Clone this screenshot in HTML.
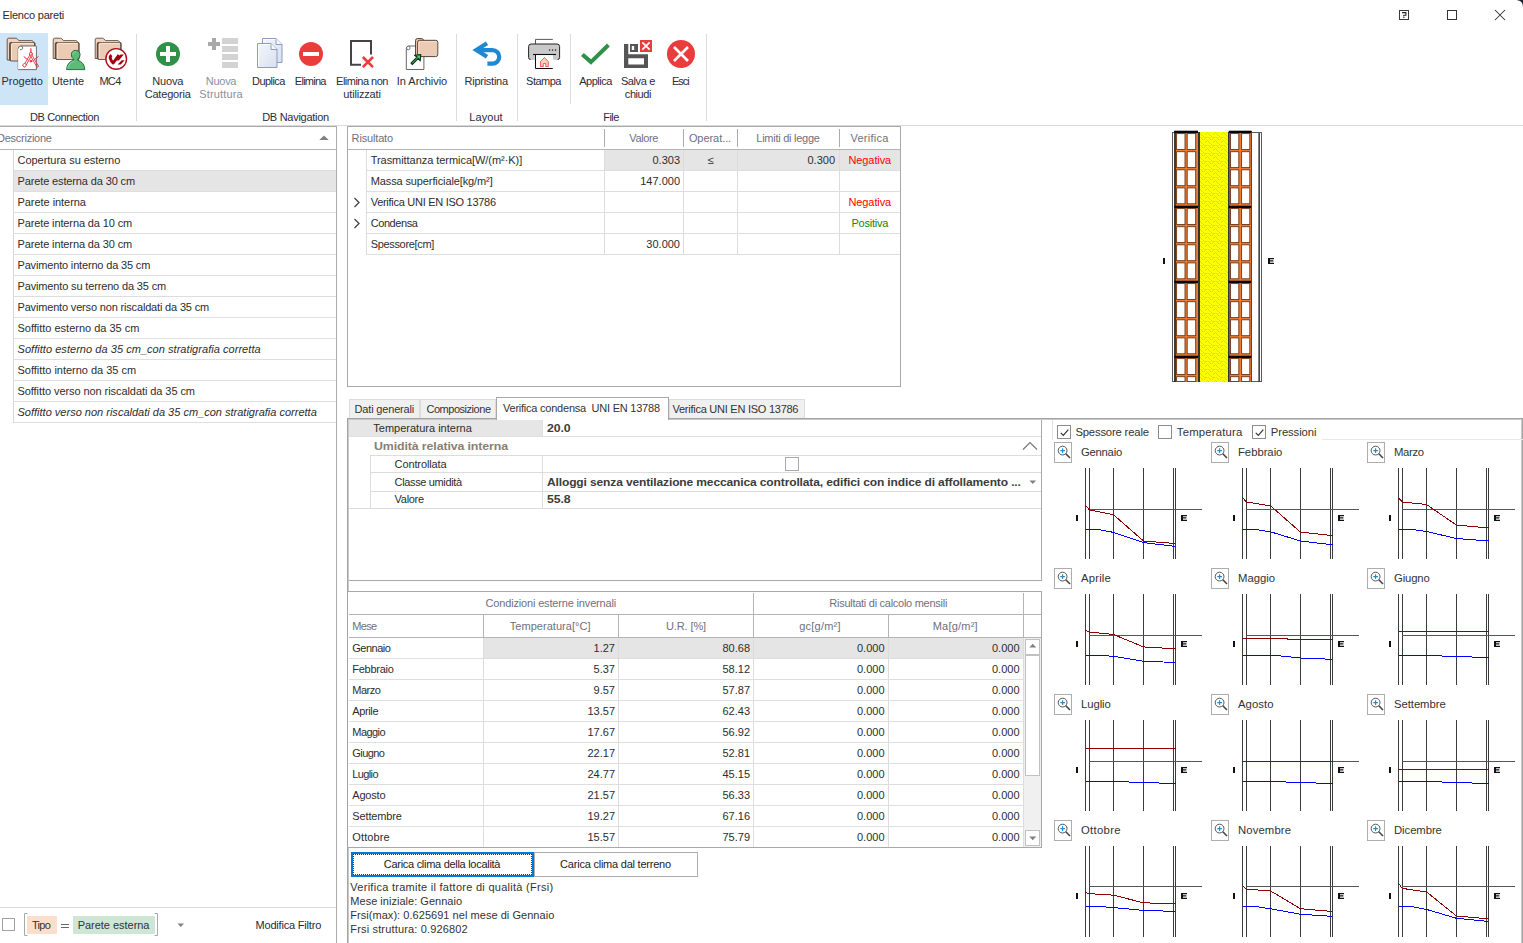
<!DOCTYPE html>
<html><head><meta charset="utf-8"><title>Elenco pareti</title>
<style>
html,body{margin:0;padding:0;background:#fff}
body{width:1523px;height:943px;overflow:hidden;position:relative;font-family:"Liberation Sans",sans-serif;font-size:11px;color:#2d2d2d}
div{position:absolute;box-sizing:border-box}
.t{white-space:nowrap;line-height:13px;letter-spacing:-0.12px}
.rb{color:#2c2c3a;letter-spacing:-0.05px}
</style></head>
<body>
<div class="t" style="left:2.5px;top:9px;color:#2a2a2a;letter-spacing:-0.202px">Elenco pareti</div>
<svg style="position:absolute;left:1390px;top:0px" width="133" height="30" viewBox="0 0 133 30">
<rect x="9.5" y="10.5" width="9" height="9" fill="none" stroke="#3a3a3a" stroke-width="1"/>
<path d="M12 12.6 h3.9 v2.6 h-2.1 v1.4" fill="none" stroke="#2a2a2a" stroke-width="1.1"/>
<rect x="13.2" y="17" width="1.2" height="1" fill="#2a2a2a"/>
<rect x="57.5" y="10.5" width="9" height="9" fill="none" stroke="#333" stroke-width="1"/>
<path d="M105 10 L115 20 M115 10 L105 20" fill="none" stroke="#333" stroke-width="1.05"/>
<path d="M126.5 0 Q133 0.5 133 7 L133 0 Z" fill="#1a2230"/>
</svg>
<div style="left:0px;top:33px;width:48px;height:72px;background:#cde5f7"></div>
<div style="left:136px;top:34px;width:1px;height:87px;background:#dcdcdc"></div>
<div style="left:456px;top:34px;width:1px;height:87px;background:#dcdcdc"></div>
<div style="left:517px;top:34px;width:1px;height:87px;background:#dcdcdc"></div>
<div style="left:570px;top:34px;width:1px;height:70px;background:#dcdcdc"></div>
<div style="left:706px;top:34px;width:1px;height:87px;background:#dcdcdc"></div>
<div class="t rb" style="left:-27.8px;width:100px;text-align:center;top:75px;;letter-spacing:-0.042px">Progetto</div>
<div class="t rb" style="left:18.0px;width:100px;text-align:center;top:75px;;letter-spacing:-0.064px">Utente</div>
<div class="t rb" style="left:60.0px;width:100px;text-align:center;top:75px;;letter-spacing:-0.667px">MC4</div>
<div class="t rb" style="left:117.69999999999999px;width:100px;text-align:center;top:75px;;letter-spacing:-0.174px">Nuova</div>
<div class="t rb" style="left:117.69999999999999px;width:100px;text-align:center;top:88px;;letter-spacing:-0.175px">Categoria</div>
<div class="t rb" style="left:171.0px;width:100px;text-align:center;top:75px;color:#8e8e99;;letter-spacing:-0.299px">Nuova</div>
<div class="t rb" style="left:171.0px;width:100px;text-align:center;top:88px;color:#8e8e99;;letter-spacing:0.139px">Struttura</div>
<div class="t rb" style="left:218.39999999999998px;width:100px;text-align:center;top:75px;;letter-spacing:-0.581px">Duplica</div>
<div class="t rb" style="left:260.3px;width:100px;text-align:center;top:75px;;letter-spacing:-0.746px">Elimina</div>
<div class="t rb" style="left:312.0px;width:100px;text-align:center;top:75px;;letter-spacing:-0.518px">Elimina non</div>
<div class="t rb" style="left:312.0px;width:100px;text-align:center;top:88px;;letter-spacing:-0.181px">utilizzati</div>
<div class="t rb" style="left:372.0px;width:100px;text-align:center;top:75px;;letter-spacing:-0.035px">In Archivio</div>
<div class="t rb" style="left:436.2px;width:100px;text-align:center;top:75px;;letter-spacing:-0.262px">Ripristina</div>
<div class="t rb" style="left:493.5px;width:100px;text-align:center;top:75px;;letter-spacing:-0.524px">Stampa</div>
<div class="t rb" style="left:545.6px;width:100px;text-align:center;top:75px;;letter-spacing:-0.480px">Applica</div>
<div class="t rb" style="left:587.9px;width:100px;text-align:center;top:75px;;letter-spacing:-0.384px">Salva e</div>
<div class="t rb" style="left:587.9px;width:100px;text-align:center;top:88px;;letter-spacing:-0.450px">chiudi</div>
<div class="t rb" style="left:630.3px;width:100px;text-align:center;top:75px;;letter-spacing:-0.994px">Esci</div>
<div class="t rb" style="left:4.5px;width:120px;text-align:center;top:111px;;letter-spacing:-0.375px">DB Connection</div>
<div class="t rb" style="left:235.5px;width:120px;text-align:center;top:111px;;letter-spacing:-0.277px">DB Navigation</div>
<div class="t rb" style="left:426.0px;width:120px;text-align:center;top:111px;;letter-spacing:0.074px">Layout</div>
<div class="t rb" style="left:551.0px;width:120px;text-align:center;top:111px;;letter-spacing:-0.578px">File</div>
<div style="left:0px;top:125px;width:1523px;height:1px;background:#dadada"></div>
<svg style="position:absolute;left:0;top:30px" width="720" height="45" viewBox="0 30 720 45"><defs>
<linearGradient id="pg" x1="0" y1="0" x2="1" y2="1"><stop offset="0" stop-color="#f4f6fb"/><stop offset="1" stop-color="#d8e0f0"/></linearGradient>
</defs><path d="M7.2 60.0 V39.800000000000004 q0 -1.6 1.6 -1.6 h7 q0.8 0 1.4 0.6 l1.6 1.8 h12.700000000000001 q0.8 0 1.4 0.6 l2.2 2.2 v16.8 z" fill="#f3d3be" stroke="#4a3a30" stroke-width="0.8" stroke-linejoin="round"/><path d="M9.7 60.4 V44.5 q0 -2 2 -2" fill="none" stroke="#5f4e44" stroke-width="1.3"/><path d="M10.6 61.0 V44.300000000000004 q0 -1.6 1.6 -1.6 H34.5 V61.0 Z" fill="#eccbb5" stroke="#4a3a30" stroke-width="0.8" stroke-linejoin="round"/><path d="M11.5 60.1 V44.7 q0 -1.1 1.1 -1.1 H33.6" fill="none" stroke="#fdecdc" stroke-width="0.9"/><path d="M20.8 46 h14.8 q0.8 0 0.8 0.8 v22.8 h-18.2 v-21 z" fill="#fff" stroke="#4d4d4d" stroke-width="0.8"/><path d="M18.6 48.6 v20.6" fill="none" stroke="#fff" stroke-width="0.9"/><path d="M18.3 48.4 q-0.2 -2.4 2.6 -2.4 q2.2 0.2 1.8 2.2 q-0.6 2 -2.6 1.6" fill="#fff" stroke="#4d4d4d" stroke-width="0.8"/><g fill="none" stroke="#ee2a3a" stroke-width="0.9" stroke-linecap="round" stroke-linejoin="round"><path d="M30.9 48.8 v3.4" stroke-width="1.2"/><circle cx="30.9" cy="53.9" r="1.5" fill="#fff"/><path d="M29.8 55.1 L23.7 65.6 l1.6 1 L31 56.4"/><path d="M32 55.1 L38.5 66.4 l-1.5 0.8 L30.8 56.4"/><path d="M24 56.7 L28 60 M38.2 56.7 L33.8 60" stroke-width="1"/><circle cx="30.9" cy="61.1" r="0.9" fill="#ee2a3a"/><path d="M22.7 64.8 l2 -1.7 l1.9 2.1 l-2.1 1.8 z" fill="#fff"/></g><path d="M53.2 58.5 V39.800000000000004 q0 -1.6 1.6 -1.6 h5.6 q0.8 0 1.4 0.6 l1.6 1.8 h12.199999999999998 q0.8 0 1.4 0.6 l2.2 2.2 v15.3 z" fill="#f3d3be" stroke="#4a3a30" stroke-width="0.8" stroke-linejoin="round"/><path d="M55.400000000000006 58.9 V44.5 q0 -2 2 -2" fill="none" stroke="#5f4e44" stroke-width="1.3"/><path d="M56.300000000000004 59.5 V44.300000000000004 q0 -1.6 1.6 -1.6 H78.6 V59.5 Z" fill="#eccbb5" stroke="#4a3a30" stroke-width="0.8" stroke-linejoin="round"/><path d="M57.2 58.6 V44.7 q0 -1.1 1.1 -1.1 H77.69999999999999" fill="none" stroke="#fdecdc" stroke-width="0.9"/><path d="M66.6 69.6 q0.4 -7.4 7 -9.4 v-1.2 q-2.3 -1.4 -2.3 -4.3 a4.4 4.4 0 0 1 8.8 0 q0 2.9 -2.3 4.3 v1.2 q6.6 2 7 9.4 z" fill="#5dbb79" stroke="#1f5f36" stroke-width="0.9" stroke-linejoin="round"/><path d="M67.8 68.6 q0.8 -5.6 6.2 -7.4 M72.6 54.6 a3.2 3.2 0 0 1 3.2 -3.1" fill="none" stroke="#86e3a6" stroke-width="0.8"/><path d="M95.2 58.5 V39.800000000000004 q0 -1.6 1.6 -1.6 h5.6 q0.8 0 1.4 0.6 l1.6 1.8 h12.199999999999998 q0.8 0 1.4 0.6 l2.2 2.2 v15.3 z" fill="#f3d3be" stroke="#4a3a30" stroke-width="0.8" stroke-linejoin="round"/><path d="M97.39999999999999 58.9 V44.5 q0 -2 2 -2" fill="none" stroke="#5f4e44" stroke-width="1.3"/><path d="M98.3 59.5 V44.300000000000004 q0 -1.6 1.6 -1.6 H120.6 V59.5 Z" fill="#eccbb5" stroke="#4a3a30" stroke-width="0.8" stroke-linejoin="round"/><path d="M99.2 58.6 V44.7 q0 -1.1 1.1 -1.1 H119.69999999999999" fill="none" stroke="#fdecdc" stroke-width="0.9"/><circle cx="116.2" cy="58.9" r="10.3" fill="#fff" stroke="#a80c1a" stroke-width="1.4"/><path d="M111.6 55.2 Q109.7 56.4 110.3 58.4 Q111.3 61.6 113.2 63 L118.9 55" fill="none" stroke="#a2000c" stroke-width="2.9" stroke-linejoin="round" stroke-linecap="butt"/><path d="M120.6 54.6 h3.2 l-5 6 h-3.2 z M121.8 60.2 h2.8 l-3.8 4.4 h-3.2 z" fill="#a2000c"/><circle cx="168" cy="54" r="12" fill="#2f9048"/><path d="M166 46 h4 v6 h6 v4 h-6 v6 h-4 v-6 h-6 v-4 h6 z" fill="#fff"/><path d="M212 38 h4 v4 h4 v4 h-4 v4 h-4 v-4 h-4 v-4 h4 z" fill="#a9a9a9"/><rect x="222" y="38" width="16" height="6" fill="#d3d3d3"/><rect x="222" y="46" width="16" height="6" fill="#d3d3d3"/><rect x="222" y="54" width="16" height="6" fill="#d3d3d3"/><rect x="222" y="62" width="16" height="6" fill="#d3d3d3"/><path d="M262.5 38.5 h13.5 l6 6 v18 h-19.5 z" fill="url(#pg)" stroke="#8e9cc4" stroke-width="1"/><path d="M276.0 38.5 v6 h6" fill="#f4f6fb" stroke="#8e9cc4" stroke-width="1"/><path d="M263.5 61.5 v-22 h12.0" fill="none" stroke="#fff" stroke-width="0.9"/><path d="M257.5 43.5 h13.5 l6 6 v18 h-19.5 z" fill="url(#pg)" stroke="#8e9cc4" stroke-width="1"/><path d="M271.0 43.5 v6 h6" fill="#f4f6fb" stroke="#8e9cc4" stroke-width="1"/><path d="M258.5 66.5 v-22 h12.0" fill="none" stroke="#fff" stroke-width="0.9"/><circle cx="311" cy="54" r="12" fill="#eb3c3c"/><rect x="303" y="52" width="16" height="4" fill="#fff"/><path d="M361 64.8 H351 V41 H371 V54.5" fill="none" stroke="#444" stroke-width="2"/><path d="M362.8 57 L373 67.2 M373 57 L362.8 67.2" fill="none" stroke="#eb3c3c" stroke-width="2.6"/><path d="M408.3 46 h14.8 q0.8 0 0.8 0.8 v22.7 h-17.6 v-21.5 z" fill="#fff" stroke="#555" stroke-width="0.9"/><circle cx="408.3" cy="48" r="1.8" fill="#fff" stroke="#555" stroke-width="0.8"/><path d="M415.5 56 v-15.5 q0 -2 2 -2 h4 q1.5 0 2 1.5 l0.5 1 h11 v15 z" fill="#e6bfa6" stroke="#4a3a30" stroke-width="0.9"/><rect x="417.6" y="40.3" width="20.2" height="16.3" rx="2" fill="#eccbb5" stroke="#4a3a30" stroke-width="0.9"/><path d="M418.8 55.5 v-12 q0 -1.8 1.8 -1.8 h15.5" fill="none" stroke="#f7e3d6" stroke-width="0.9"/><path d="M411 63.2 L417.2 57 L414.5 55.2 L420.8 54.6 L420.2 61 L418.4 58.3 L412.2 64.5 Z" fill="#45d678" stroke="#0e2e18" stroke-width="1.1" stroke-linejoin="round"/><path d="M487 43.2 L476.3 50 L487 56.8" fill="none" stroke="#1e88d2" stroke-width="4.2" stroke-linejoin="miter"/><path d="M477.5 50.1 H492.4 a6.8 6.8 0 0 1 0 13.6 H487.4" fill="none" stroke="#1e88d2" stroke-width="4.2"/><path d="M535.5 44 v-4.6 h17.3" fill="none" stroke="#444" stroke-width="0.9"/><path d="M528.6 58 v-11.5 q0 -2.5 2.5 -2.5 h26 q2.5 0 2.5 2.5 v11.5 q0 1.8 -1.8 1.8 h-4.8 v-5.3 h-17.8 v5.3 h-4.8 q-1.8 0 -1.8 -1.8 z" fill="#c9c9c9"/><path d="M528.6 57.5 v-11 q0 -2.5 2.5 -2.5 h26 q2.5 0 2.5 2.5 v11" fill="none" stroke="#222" stroke-width="1"/><path d="M528.6 57.5 q0 2 2 2 M559.6 57.5 q0 2 -2 2" fill="none" stroke="#222" stroke-width="1"/><rect x="535.5" y="54.8" width="17.3" height="13.8" fill="#fff"/><path d="M533 54.5 h23" fill="none" stroke="#111" stroke-width="1.1"/><path d="M535.5 54.5 v14 h17.3" fill="none" stroke="#111" stroke-width="1"/><rect x="548.9" y="49.4" width="1.3" height="1.3" fill="#222"/><rect x="551.9" y="49.4" width="1.3" height="1.3" fill="#222"/><rect x="554.9" y="49.4" width="1.3" height="1.3" fill="#222"/><path d="M540.5 66.5 v-5 L544.3 57.6 L548.3 61.5 v5 h-2.6 v-3 h-2.4 v3 z" fill="#f3d2bd" stroke="#ee3a3a" stroke-width="0.8"/><path d="M583.8 53 L591 59.3 L607 43.6 L609.8 46.6 L591 64.8 L581 56 Z" fill="#2f9048"/><path d="M624 44 h4.3 v10.2 h19.7 v13.8 h-24 z M628.3 58.2 h15.7 v6.2 h-15.7 z" fill="#555" fill-rule="evenodd"/><path d="M630 44 h8 v8 h-8 z M631.8 46 h2.4 v4 h-2.4 z" fill="#555" fill-rule="evenodd"/><rect x="640" y="40" width="12" height="12" fill="#eb3c3c"/><path d="M642.3 42.3 L649.7 49.7 M649.7 42.3 L642.3 49.7" stroke="#fff" stroke-width="1.7" fill="none"/><circle cx="681" cy="54" r="14" fill="#eb3c3c"/><path d="M674 47 L688 61 M688 47 L674 61" stroke="#fff" stroke-width="2.7" fill="none"/></svg>
<div style="left:0px;top:126px;width:337px;height:1px;background:#ababab"></div>
<div style="left:336px;top:126px;width:1px;height:817px;background:#ababab"></div>
<div class="t" style="left:-3px;top:132px;color:#70707c;letter-spacing:-0.25px">Descrizione</div>
<svg style="position:absolute;left:319px;top:135px" width="10" height="6"><path d="M0.3 5 L5 0.4 L9.7 5 Z" fill="#808080"/></svg>
<div style="left:0px;top:149px;width:336px;height:1px;background:#b4b4b4"></div>
<div style="left:14px;top:171px;width:322px;height:20px;background:#e5e5e5"></div>
<div style="left:13px;top:150px;width:1px;height:273px;background:#d8d8d8"></div>
<div class="t" style="left:17.5px;top:154px;;letter-spacing:-0.029px">Copertura su esterno</div>
<div style="left:14px;top:170px;width:322px;height:1px;background:#dedede"></div>
<div class="t" style="left:17.5px;top:175px;;letter-spacing:-0.130px">Parete esterna da 30 cm</div>
<div style="left:14px;top:191px;width:322px;height:1px;background:#dedede"></div>
<div class="t" style="left:17.5px;top:196px;;letter-spacing:-0.047px">Parete interna</div>
<div style="left:14px;top:212px;width:322px;height:1px;background:#dedede"></div>
<div class="t" style="left:17.5px;top:217px;;letter-spacing:-0.123px">Parete interna da 10 cm</div>
<div style="left:14px;top:233px;width:322px;height:1px;background:#dedede"></div>
<div class="t" style="left:17.5px;top:238px;;letter-spacing:-0.123px">Parete interna da 30 cm</div>
<div style="left:14px;top:254px;width:322px;height:1px;background:#dedede"></div>
<div class="t" style="left:17.5px;top:259px;;letter-spacing:-0.167px">Pavimento interno da 35 cm</div>
<div style="left:14px;top:275px;width:322px;height:1px;background:#dedede"></div>
<div class="t" style="left:17.5px;top:280px;;letter-spacing:-0.149px">Pavimento su terreno da 35 cm</div>
<div style="left:14px;top:296px;width:322px;height:1px;background:#dedede"></div>
<div class="t" style="left:17.5px;top:301px;;letter-spacing:-0.169px">Pavimento verso non riscaldati da 35 cm</div>
<div style="left:14px;top:317px;width:322px;height:1px;background:#dedede"></div>
<div class="t" style="left:17.5px;top:322px;;letter-spacing:-0.012px">Soffitto esterno da 35 cm</div>
<div style="left:14px;top:338px;width:322px;height:1px;background:#dedede"></div>
<div class="t" style="left:17.5px;top:343px;font-style:italic;letter-spacing:0.044px">Soffitto esterno da 35 cm_con stratigrafia corretta</div>
<div style="left:14px;top:359px;width:322px;height:1px;background:#dedede"></div>
<div class="t" style="left:17.5px;top:364px;;letter-spacing:-0.019px">Soffitto interno da 35 cm</div>
<div style="left:14px;top:380px;width:322px;height:1px;background:#dedede"></div>
<div class="t" style="left:17.5px;top:385px;;letter-spacing:-0.072px">Soffitto verso non riscaldati da 35 cm</div>
<div style="left:14px;top:401px;width:322px;height:1px;background:#dedede"></div>
<div class="t" style="left:17.5px;top:406px;font-style:italic;letter-spacing:0.005px">Soffitto verso non riscaldati da 35 cm_con stratigrafia corretta</div>
<div style="left:14px;top:422px;width:322px;height:1px;background:#dedede"></div>
<div style="left:0px;top:907px;width:336px;height:1px;background:#dcdcdc"></div>
<div style="left:2px;top:918px;width:13px;height:13px;border:1px solid #a0a0a0;background:#fff"></div>
<svg style="position:absolute;left:24px;top:913px" width="136" height="24"><path d="M3.5 0.5 h-3 v22 h3 M130.5 0.5 h3 v22 h-3" fill="none" stroke="#a8a8a8"/></svg>
<div style="left:27px;top:916px;width:30px;height:18px;background:#fbdfcc;border-radius:1px"></div>
<div class="t" style="left:32px;top:919px;color:#333;letter-spacing:-0.733px">Tipo</div>
<div style="left:61px;top:924px;width:8px;height:1px;background:#666"></div>
<div style="left:61px;top:927px;width:8px;height:1px;background:#666"></div>
<div style="left:73px;top:916px;width:82px;height:18px;background:#cde6d6;border-radius:1px"></div>
<div class="t" style="left:77.7px;top:919px;color:#333;letter-spacing:-0.027px">Parete esterna</div>
<svg style="position:absolute;left:177px;top:923px" width="8" height="5"><path d="M0.5 0.5 L7 0.5 L3.75 4 Z" fill="#808080"/></svg>
<div class="t" style="left:255.5px;top:919px;color:#2a2a3a;letter-spacing:-0.191px">Modifica Filtro</div>
<div style="left:347px;top:126px;width:554px;height:261px;border:1px solid #a8a8a8;background:#fff"></div>
<div style="left:348px;top:149px;width:552px;height:1px;background:#b4b4b4"></div>
<div style="left:604px;top:129px;width:1px;height:18px;background:#ababab"></div>
<div style="left:683px;top:129px;width:1px;height:18px;background:#ababab"></div>
<div style="left:737px;top:129px;width:1px;height:18px;background:#ababab"></div>
<div style="left:839px;top:129px;width:1px;height:18px;background:#ababab"></div>
<div class="t" style="left:351.6px;top:132px;color:#70707c;;letter-spacing:-0.162px">Risultato</div>
<div class="t" style="left:603.6px;width:80px;text-align:center;top:132px;color:#70707c;;letter-spacing:-0.397px">Valore</div>
<div class="t" style="left:680.0px;width:60px;text-align:center;top:132px;color:#70707c;;letter-spacing:-0.062px">Operat...</div>
<div class="t" style="left:738.0px;width:100px;text-align:center;top:132px;color:#70707c;;letter-spacing:-0.262px">Limiti di legge</div>
<div class="t" style="left:839.5px;width:60px;text-align:center;top:132px;color:#70707c;;letter-spacing:0.246px">Verifica</div>
<div style="left:605px;top:150px;width:295px;height:20px;background:#e5e5e5"></div>
<div style="left:366px;top:150px;width:1px;height:105px;background:#dcdcdc"></div>
<div style="left:604px;top:150px;width:1px;height:105px;background:#dcdcdc"></div>
<div style="left:683px;top:150px;width:1px;height:105px;background:#dcdcdc"></div>
<div style="left:737px;top:150px;width:1px;height:105px;background:#dcdcdc"></div>
<div style="left:839px;top:150px;width:1px;height:105px;background:#dcdcdc"></div>
<div class="t" style="left:370.7px;top:154px;;letter-spacing:-0.048px">Trasmittanza termica[W/(m²·K)]</div>
<div class="t" style="right:843px;top:154px;letter-spacing:0">0.303</div>
<div class="t" style="left:690.5px;width:40px;text-align:center;top:154px;">≤</div>
<div class="t" style="right:688px;top:154px;letter-spacing:0">0.300</div>
<div class="t" style="left:839.8px;width:60px;text-align:center;top:154px;color:#f00;letter-spacing:-0.103px">Negativa</div>
<div style="left:367px;top:170px;width:533px;height:1px;background:#dedede"></div>
<div class="t" style="left:370.7px;top:175px;;letter-spacing:-0.113px">Massa superficiale[kg/m²]</div>
<div class="t" style="right:843px;top:175px;letter-spacing:0">147.000</div>
<div style="left:367px;top:191px;width:533px;height:1px;background:#dedede"></div>
<div class="t" style="left:370.7px;top:196px;;letter-spacing:-0.278px">Verifica UNI EN ISO 13786</div>
<div class="t" style="left:839.8px;width:60px;text-align:center;top:196px;color:#f00;letter-spacing:-0.103px">Negativa</div>
<svg style="position:absolute;left:353px;top:197px" width="8" height="11"><path d="M1.5 1 L6 5.5 L1.5 10" fill="none" stroke="#444" stroke-width="1.3"/></svg>
<div style="left:367px;top:212px;width:533px;height:1px;background:#dedede"></div>
<div class="t" style="left:370.7px;top:217px;;letter-spacing:-0.422px">Condensa</div>
<div class="t" style="left:839.8px;width:60px;text-align:center;top:217px;color:#0a8a0a;letter-spacing:-0.219px">Positiva</div>
<svg style="position:absolute;left:353px;top:218px" width="8" height="11"><path d="M1.5 1 L6 5.5 L1.5 10" fill="none" stroke="#444" stroke-width="1.3"/></svg>
<div style="left:367px;top:233px;width:533px;height:1px;background:#dedede"></div>
<div class="t" style="left:370.7px;top:238px;;letter-spacing:-0.332px">Spessore[cm]</div>
<div class="t" style="right:843px;top:238px;letter-spacing:0">30.000</div>
<div style="left:367px;top:254px;width:533px;height:1px;background:#dedede"></div>
<div style="left:347px;top:418px;width:1176px;height:1px;background:#a3a3a3"></div>
<div style="left:348px;top:419px;width:1175px;height:1px;background:#c9c9c9"></div>
<div style="left:1521px;top:420px;width:1px;height:523px;background:#c9c9c9"></div>
<div style="left:1522px;top:418px;width:1px;height:525px;background:#a3a3a3"></div>
<div style="left:347px;top:418px;width:1px;height:525px;background:#a3a3a3"></div>
<div style="left:348px;top:419px;width:1px;height:524px;background:#c9c9c9"></div>
<div style="left:349px;top:399px;width:71px;height:19px;background:#f0f0f0;border:1px solid #dcdcdc;border-bottom:none"></div>
<div class="t" style="left:354.5px;top:403px;color:#333;letter-spacing:-0.164px">Dati generali</div>
<div style="left:420px;top:399px;width:76px;height:19px;background:#f0f0f0;border:1px solid #dcdcdc;border-bottom:none"></div>
<div class="t" style="left:426.5px;top:403px;color:#333;letter-spacing:-0.473px">Composizione</div>
<div style="left:669px;top:399px;width:136px;height:19px;background:#f0f0f0;border:1px solid #dcdcdc;border-bottom:none"></div>
<div class="t" style="left:672.5px;top:403px;color:#333;letter-spacing:-0.253px">Verifica UNI EN ISO 13786</div>
<div style="left:496px;top:397px;width:173px;height:23px;background:#fff;border:1px solid #a8a8a8;border-bottom:none"></div>
<div class="t" style="left:503px;top:402px;color:#333;letter-spacing:-0.229px">Verifica condensa&nbsp; UNI EN 13788</div>
<div style="left:1041px;top:420px;width:1px;height:161px;background:#a8a8a8"></div>
<div style="left:349px;top:580px;width:693px;height:1px;background:#a8a8a8"></div>
<div style="left:349px;top:420px;width:193px;height:16px;background:#e6e6e6"></div>
<div class="t" style="left:373.3px;top:422px;;letter-spacing:0.003px">Temperatura interna</div>
<div class="t" style="left:547px;top:422px;font-weight:bold;color:#3c3c3c;transform:scaleX(1.1176);transform-origin:left center">20.0</div>
<div style="left:349px;top:436px;width:692px;height:1px;background:#e0e0e0"></div>
<div class="t" style="left:374px;top:440px;font-weight:bold;color:#8a7f74;transform:scaleX(1.1281);transform-origin:left center">Umidità relativa interna</div>
<svg style="position:absolute;left:1022px;top:441px" width="16" height="10"><path d="M1 8.5 L8 1.5 L15 8.5" fill="none" stroke="#777" stroke-width="1.2"/></svg>
<div style="left:370px;top:455px;width:671px;height:1px;background:#dcdcdc"></div>
<div style="left:370px;top:455px;width:1px;height:54px;background:#dcdcdc"></div>
<div style="left:542px;top:420px;width:1px;height:16px;background:#e0e0e0"></div>
<div style="left:542px;top:455px;width:1px;height:54px;background:#dcdcdc"></div>
<div class="t" style="left:394.6px;top:458px;">Controllata</div>
<div class="t" style="left:394.6px;top:476px;;letter-spacing:-0.357px">Classe umidità</div>
<div class="t" style="left:547px;top:476px;font-weight:bold;color:#3c3c3c;transform:scaleX(1.0921);transform-origin:left center">Alloggi senza ventilazione meccanica controllata, edifici con indice di affollamento ...</div>
<div class="t" style="left:394.6px;top:493px;;letter-spacing:-0.297px">Valore</div>
<div class="t" style="left:547px;top:493px;font-weight:bold;color:#3c3c3c;transform:scaleX(1.1176);transform-origin:left center">55.8</div>
<div style="left:370px;top:472px;width:671px;height:1px;background:#dcdcdc"></div>
<div style="left:370px;top:491px;width:671px;height:1px;background:#dcdcdc"></div>
<div style="left:349px;top:508px;width:692px;height:1px;background:#dcdcdc"></div>
<div style="left:785px;top:457px;width:14px;height:14px;border:1px solid #a8a8a8;background:#fff"></div>
<svg style="position:absolute;left:1029px;top:480px" width="8" height="5"><path d="M0.5 0.5 L7 0.5 L3.75 4 Z" fill="#808080"/></svg>
<div style="left:348px;top:591px;width:694px;height:257px;border:1px solid #a8a8a8;border-left:none;background:#fff"></div>
<div style="left:349px;top:614px;width:692px;height:1px;background:#b4b4b4"></div>
<div style="left:349px;top:637px;width:692px;height:1px;background:#b4b4b4"></div>
<div style="left:753px;top:593px;width:1px;height:44px;background:#b4b4b4"></div>
<div style="left:1023px;top:593px;width:1px;height:44px;background:#b4b4b4"></div>
<div style="left:483px;top:615px;width:1px;height:22px;background:#b4b4b4"></div>
<div style="left:618px;top:615px;width:1px;height:22px;background:#b4b4b4"></div>
<div style="left:888px;top:615px;width:1px;height:22px;background:#b4b4b4"></div>
<div class="t" style="left:400.79999999999995px;width:300px;text-align:center;top:597px;color:#70707c;;letter-spacing:-0.164px">Condizioni esterne invernali</div>
<div class="t" style="left:738.2px;width:300px;text-align:center;top:597px;color:#70707c;;letter-spacing:-0.271px">Risultati di calcolo mensili</div>
<div class="t" style="left:352.3px;top:620px;color:#70707c;;letter-spacing:-0.702px">Mese</div>
<div class="t" style="left:400.20000000000005px;width:300px;text-align:center;top:620px;color:#70707c;;letter-spacing:0.049px">Temperatura[°C]</div>
<div class="t" style="left:536.0px;width:300px;text-align:center;top:620px;color:#70707c;">U.R. [%]</div>
<div class="t" style="left:670.0px;width:300px;text-align:center;top:620px;color:#70707c;;letter-spacing:0.238px">gc[g/m²]</div>
<div class="t" style="left:805.3px;width:300px;text-align:center;top:620px;color:#70707c;;letter-spacing:0.213px">Ma[g/m²]</div>
<div style="left:484px;top:638px;width:539px;height:20px;background:#e5e5e5"></div>
<div style="left:483px;top:638px;width:1px;height:209px;background:#dcdcdc"></div>
<div style="left:618px;top:638px;width:1px;height:209px;background:#dcdcdc"></div>
<div style="left:753px;top:638px;width:1px;height:209px;background:#dcdcdc"></div>
<div style="left:888px;top:638px;width:1px;height:209px;background:#dcdcdc"></div>
<div style="left:1023px;top:638px;width:1px;height:209px;background:#dcdcdc"></div>
<div class="t" style="left:352.3px;top:642px;;letter-spacing:-0.516px">Gennaio</div>
<div class="t" style="right:908px;top:642px;letter-spacing:0">1.27</div>
<div class="t" style="right:773px;top:642px;letter-spacing:0">80.68</div>
<div class="t" style="right:638.5px;top:642px;letter-spacing:0">0.000</div>
<div class="t" style="right:503.5px;top:642px;letter-spacing:0">0.000</div>
<div style="left:349px;top:658px;width:675px;height:1px;background:#dedede"></div>
<div class="t" style="left:352.3px;top:663px;;letter-spacing:-0.260px">Febbraio</div>
<div class="t" style="right:908px;top:663px;letter-spacing:0">5.37</div>
<div class="t" style="right:773px;top:663px;letter-spacing:0">58.12</div>
<div class="t" style="right:638.5px;top:663px;letter-spacing:0">0.000</div>
<div class="t" style="right:503.5px;top:663px;letter-spacing:0">0.000</div>
<div style="left:349px;top:679px;width:675px;height:1px;background:#dedede"></div>
<div class="t" style="left:352.3px;top:684px;;letter-spacing:-0.491px">Marzo</div>
<div class="t" style="right:908px;top:684px;letter-spacing:0">9.57</div>
<div class="t" style="right:773px;top:684px;letter-spacing:0">57.87</div>
<div class="t" style="right:638.5px;top:684px;letter-spacing:0">0.000</div>
<div class="t" style="right:503.5px;top:684px;letter-spacing:0">0.000</div>
<div style="left:349px;top:700px;width:675px;height:1px;background:#dedede"></div>
<div class="t" style="left:352.3px;top:705px;;letter-spacing:-0.385px">Aprile</div>
<div class="t" style="right:908px;top:705px;letter-spacing:0">13.57</div>
<div class="t" style="right:773px;top:705px;letter-spacing:0">62.43</div>
<div class="t" style="right:638.5px;top:705px;letter-spacing:0">0.000</div>
<div class="t" style="right:503.5px;top:705px;letter-spacing:0">0.000</div>
<div style="left:349px;top:721px;width:675px;height:1px;background:#dedede"></div>
<div class="t" style="left:352.3px;top:726px;;letter-spacing:-0.556px">Maggio</div>
<div class="t" style="right:908px;top:726px;letter-spacing:0">17.67</div>
<div class="t" style="right:773px;top:726px;letter-spacing:0">56.92</div>
<div class="t" style="right:638.5px;top:726px;letter-spacing:0">0.000</div>
<div class="t" style="right:503.5px;top:726px;letter-spacing:0">0.000</div>
<div style="left:349px;top:742px;width:675px;height:1px;background:#dedede"></div>
<div class="t" style="left:352.3px;top:747px;;letter-spacing:-0.577px">Giugno</div>
<div class="t" style="right:908px;top:747px;letter-spacing:0">22.17</div>
<div class="t" style="right:773px;top:747px;letter-spacing:0">52.81</div>
<div class="t" style="right:638.5px;top:747px;letter-spacing:0">0.000</div>
<div class="t" style="right:503.5px;top:747px;letter-spacing:0">0.000</div>
<div style="left:349px;top:763px;width:675px;height:1px;background:#dedede"></div>
<div class="t" style="left:352.3px;top:768px;;letter-spacing:-0.632px">Luglio</div>
<div class="t" style="right:908px;top:768px;letter-spacing:0">24.77</div>
<div class="t" style="right:773px;top:768px;letter-spacing:0">45.15</div>
<div class="t" style="right:638.5px;top:768px;letter-spacing:0">0.000</div>
<div class="t" style="right:503.5px;top:768px;letter-spacing:0">0.000</div>
<div style="left:349px;top:784px;width:675px;height:1px;background:#dedede"></div>
<div class="t" style="left:352.3px;top:789px;;letter-spacing:-0.190px">Agosto</div>
<div class="t" style="right:908px;top:789px;letter-spacing:0">21.57</div>
<div class="t" style="right:773px;top:789px;letter-spacing:0">56.33</div>
<div class="t" style="right:638.5px;top:789px;letter-spacing:0">0.000</div>
<div class="t" style="right:503.5px;top:789px;letter-spacing:0">0.000</div>
<div style="left:349px;top:805px;width:675px;height:1px;background:#dedede"></div>
<div class="t" style="left:352.3px;top:810px;;letter-spacing:-0.144px">Settembre</div>
<div class="t" style="right:908px;top:810px;letter-spacing:0">19.27</div>
<div class="t" style="right:773px;top:810px;letter-spacing:0">67.16</div>
<div class="t" style="right:638.5px;top:810px;letter-spacing:0">0.000</div>
<div class="t" style="right:503.5px;top:810px;letter-spacing:0">0.000</div>
<div style="left:349px;top:826px;width:675px;height:1px;background:#dedede"></div>
<div class="t" style="left:352.3px;top:831px;;letter-spacing:0.119px">Ottobre</div>
<div class="t" style="right:908px;top:831px;letter-spacing:0">15.57</div>
<div class="t" style="right:773px;top:831px;letter-spacing:0">75.79</div>
<div class="t" style="right:638.5px;top:831px;letter-spacing:0">0.000</div>
<div class="t" style="right:503.5px;top:831px;letter-spacing:0">0.000</div>
<div style="left:1024px;top:638px;width:17px;height:209px;background:#f0f0f0"></div>
<div style="left:1025px;top:639px;width:15px;height:16px;background:#fff;border:1px solid #c0c0c0"></div>
<svg style="position:absolute;left:1029px;top:643px" width="8" height="5"><path d="M0.3 4.5 L3.75 0.8 L7.2 4.5 Z" fill="#808080"/></svg>
<div style="left:1025px;top:655px;width:15px;height:121px;background:#fff;border:1px solid #c0c0c0"></div>
<div style="left:1025px;top:830px;width:15px;height:16px;background:#fff;border:1px solid #c0c0c0"></div>
<svg style="position:absolute;left:1029px;top:836px" width="8" height="5"><path d="M0.3 0.5 L7.2 0.5 L3.75 4.2 Z" fill="#808080"/></svg>
<div style="left:351px;top:852px;width:183px;height:25px;border:2px solid #0078d7;background:#fff"></div>
<div style="left:353px;top:854px;width:179px;height:21px;border:1px dotted #333;"></div>
<div class="t" style="left:352.0px;width:180px;text-align:center;top:858px;color:#222;letter-spacing:-0.289px">Carica clima della località</div>
<div style="left:534px;top:852px;width:164px;height:25px;border:1px solid #adadad;background:#fff"></div>
<div class="t" style="left:535.5px;width:160px;text-align:center;top:858px;color:#222;letter-spacing:-0.224px">Carica clima dal terreno</div>
<div class="t" style="left:350.3px;top:881px;color:#333;letter-spacing:0.274px">Verifica tramite il fattore di qualità (Frsi)</div>
<div class="t" style="left:350.3px;top:895px;color:#333;letter-spacing:0.024px">Mese iniziale: Gennaio</div>
<div class="t" style="left:350.3px;top:909px;color:#333;letter-spacing:0.042px">Frsi(max): 0.625691 nel mese di Gennaio</div>
<div class="t" style="left:350.3px;top:923px;color:#333;letter-spacing:0.159px">Frsi struttura: 0.926802</div>
<svg style="position:absolute;left:1160px;top:125px" width="120" height="265" viewBox="0 0 120 265" shape-rendering="crispEdges"><defs><pattern id="ins" width="8" height="8" patternUnits="userSpaceOnUse"><rect width="8" height="8" fill="#ffff00"/><rect x="0" y="0" width="1" height="1" fill="#c4c4dc"/><rect x="1" y="1" width="1" height="1" fill="#c4c4dc"/><rect x="2" y="2" width="1" height="1" fill="#c4c4dc"/><rect x="3" y="3" width="1" height="1" fill="#c4c4dc"/><rect x="5" y="1" width="1" height="1" fill="#c4c4dc"/><rect x="6" y="0" width="1" height="1" fill="#c4c4dc"/><rect x="4" y="4" width="1" height="1" fill="#c4c4dc"/><rect x="5" y="4" width="1" height="1" fill="#c4c4dc"/><rect x="6" y="4" width="1" height="1" fill="#c4c4dc"/><rect x="0" y="4" width="1" height="1" fill="#c4c4dc"/><rect x="2" y="6" width="1" height="1" fill="#c4c4dc"/><rect x="1" y="5" width="1" height="1" fill="#c4c4dc"/><rect x="7" y="7" width="1" height="1" fill="#c4c4dc"/><rect x="4" y="6" width="1" height="1" fill="#c4c4dc"/></pattern></defs><rect x="12.5" y="7.5" width="89" height="249" fill="#fff" stroke="#5a5a5a" stroke-width="1"/><rect x="98.40" y="8" width="1.5" height="249" fill="#333" shape-rendering="auto"/><rect x="40" y="7" width="28" height="250" fill="url(#ins)"/><rect x="38" y="7" width="2" height="250" fill="#333"/><rect x="68" y="7" width="2" height="250" fill="#333"/><rect x="15" y="6" width="23" height="251" fill="#f07c34" shape-rendering="auto"/><rect x="14.20" y="5.70" width="23.8" height="2.4" fill="#050505" shape-rendering="auto"/><rect x="16.60" y="8.60" width="8.4" height="15.90" fill="#fff" stroke="#6e3712" stroke-width="0.9" shape-rendering="auto"/><rect x="27.20" y="8.60" width="8.5" height="15.90" fill="#fff" stroke="#6e3712" stroke-width="0.9" shape-rendering="auto"/><rect x="16.60" y="26.70" width="8.4" height="15.90" fill="#fff" stroke="#6e3712" stroke-width="0.9" shape-rendering="auto"/><rect x="27.20" y="26.70" width="8.5" height="15.90" fill="#fff" stroke="#6e3712" stroke-width="0.9" shape-rendering="auto"/><rect x="16.60" y="44.80" width="8.4" height="15.90" fill="#fff" stroke="#6e3712" stroke-width="0.9" shape-rendering="auto"/><rect x="27.20" y="44.80" width="8.5" height="15.90" fill="#fff" stroke="#6e3712" stroke-width="0.9" shape-rendering="auto"/><rect x="16.60" y="62.90" width="8.4" height="15.90" fill="#fff" stroke="#6e3712" stroke-width="0.9" shape-rendering="auto"/><rect x="27.20" y="62.90" width="8.5" height="15.90" fill="#fff" stroke="#6e3712" stroke-width="0.9" shape-rendering="auto"/><rect x="14.20" y="80.70" width="23.8" height="2.4" fill="#050505" shape-rendering="auto"/><rect x="16.60" y="83.60" width="8.4" height="15.90" fill="#fff" stroke="#6e3712" stroke-width="0.9" shape-rendering="auto"/><rect x="27.20" y="83.60" width="8.5" height="15.90" fill="#fff" stroke="#6e3712" stroke-width="0.9" shape-rendering="auto"/><rect x="16.60" y="101.70" width="8.4" height="15.90" fill="#fff" stroke="#6e3712" stroke-width="0.9" shape-rendering="auto"/><rect x="27.20" y="101.70" width="8.5" height="15.90" fill="#fff" stroke="#6e3712" stroke-width="0.9" shape-rendering="auto"/><rect x="16.60" y="119.80" width="8.4" height="15.90" fill="#fff" stroke="#6e3712" stroke-width="0.9" shape-rendering="auto"/><rect x="27.20" y="119.80" width="8.5" height="15.90" fill="#fff" stroke="#6e3712" stroke-width="0.9" shape-rendering="auto"/><rect x="16.60" y="137.90" width="8.4" height="15.90" fill="#fff" stroke="#6e3712" stroke-width="0.9" shape-rendering="auto"/><rect x="27.20" y="137.90" width="8.5" height="15.90" fill="#fff" stroke="#6e3712" stroke-width="0.9" shape-rendering="auto"/><rect x="14.20" y="155.70" width="23.8" height="2.4" fill="#050505" shape-rendering="auto"/><rect x="16.60" y="158.60" width="8.4" height="15.90" fill="#fff" stroke="#6e3712" stroke-width="0.9" shape-rendering="auto"/><rect x="27.20" y="158.60" width="8.5" height="15.90" fill="#fff" stroke="#6e3712" stroke-width="0.9" shape-rendering="auto"/><rect x="16.60" y="176.70" width="8.4" height="15.90" fill="#fff" stroke="#6e3712" stroke-width="0.9" shape-rendering="auto"/><rect x="27.20" y="176.70" width="8.5" height="15.90" fill="#fff" stroke="#6e3712" stroke-width="0.9" shape-rendering="auto"/><rect x="16.60" y="194.80" width="8.4" height="15.90" fill="#fff" stroke="#6e3712" stroke-width="0.9" shape-rendering="auto"/><rect x="27.20" y="194.80" width="8.5" height="15.90" fill="#fff" stroke="#6e3712" stroke-width="0.9" shape-rendering="auto"/><rect x="16.60" y="212.90" width="8.4" height="15.90" fill="#fff" stroke="#6e3712" stroke-width="0.9" shape-rendering="auto"/><rect x="27.20" y="212.90" width="8.5" height="15.90" fill="#fff" stroke="#6e3712" stroke-width="0.9" shape-rendering="auto"/><rect x="14.20" y="230.70" width="23.8" height="2.4" fill="#050505" shape-rendering="auto"/><rect x="16.60" y="233.60" width="8.4" height="15.90" fill="#fff" stroke="#6e3712" stroke-width="0.9" shape-rendering="auto"/><rect x="27.20" y="233.60" width="8.5" height="15.90" fill="#fff" stroke="#6e3712" stroke-width="0.9" shape-rendering="auto"/><rect x="16.60" y="251.70" width="8.4" height="4.80" fill="#fff" stroke="#6e3712" stroke-width="0.9" shape-rendering="auto"/><rect x="27.20" y="251.70" width="8.5" height="4.80" fill="#fff" stroke="#6e3712" stroke-width="0.9" shape-rendering="auto"/><rect x="69.5" y="6" width="22.2" height="251" fill="#f07c34" shape-rendering="auto"/><rect x="68.70" y="5.70" width="23.0" height="2.4" fill="#050505" shape-rendering="auto"/><rect x="70.50" y="8.60" width="8.3" height="15.90" fill="#fff" stroke="#6e3712" stroke-width="0.9" shape-rendering="auto"/><rect x="81.60" y="8.60" width="8.2" height="15.90" fill="#fff" stroke="#6e3712" stroke-width="0.9" shape-rendering="auto"/><rect x="70.50" y="26.70" width="8.3" height="15.90" fill="#fff" stroke="#6e3712" stroke-width="0.9" shape-rendering="auto"/><rect x="81.60" y="26.70" width="8.2" height="15.90" fill="#fff" stroke="#6e3712" stroke-width="0.9" shape-rendering="auto"/><rect x="70.50" y="44.80" width="8.3" height="15.90" fill="#fff" stroke="#6e3712" stroke-width="0.9" shape-rendering="auto"/><rect x="81.60" y="44.80" width="8.2" height="15.90" fill="#fff" stroke="#6e3712" stroke-width="0.9" shape-rendering="auto"/><rect x="70.50" y="62.90" width="8.3" height="15.90" fill="#fff" stroke="#6e3712" stroke-width="0.9" shape-rendering="auto"/><rect x="81.60" y="62.90" width="8.2" height="15.90" fill="#fff" stroke="#6e3712" stroke-width="0.9" shape-rendering="auto"/><rect x="68.70" y="80.70" width="23.0" height="2.4" fill="#050505" shape-rendering="auto"/><rect x="70.50" y="83.60" width="8.3" height="15.90" fill="#fff" stroke="#6e3712" stroke-width="0.9" shape-rendering="auto"/><rect x="81.60" y="83.60" width="8.2" height="15.90" fill="#fff" stroke="#6e3712" stroke-width="0.9" shape-rendering="auto"/><rect x="70.50" y="101.70" width="8.3" height="15.90" fill="#fff" stroke="#6e3712" stroke-width="0.9" shape-rendering="auto"/><rect x="81.60" y="101.70" width="8.2" height="15.90" fill="#fff" stroke="#6e3712" stroke-width="0.9" shape-rendering="auto"/><rect x="70.50" y="119.80" width="8.3" height="15.90" fill="#fff" stroke="#6e3712" stroke-width="0.9" shape-rendering="auto"/><rect x="81.60" y="119.80" width="8.2" height="15.90" fill="#fff" stroke="#6e3712" stroke-width="0.9" shape-rendering="auto"/><rect x="70.50" y="137.90" width="8.3" height="15.90" fill="#fff" stroke="#6e3712" stroke-width="0.9" shape-rendering="auto"/><rect x="81.60" y="137.90" width="8.2" height="15.90" fill="#fff" stroke="#6e3712" stroke-width="0.9" shape-rendering="auto"/><rect x="68.70" y="155.70" width="23.0" height="2.4" fill="#050505" shape-rendering="auto"/><rect x="70.50" y="158.60" width="8.3" height="15.90" fill="#fff" stroke="#6e3712" stroke-width="0.9" shape-rendering="auto"/><rect x="81.60" y="158.60" width="8.2" height="15.90" fill="#fff" stroke="#6e3712" stroke-width="0.9" shape-rendering="auto"/><rect x="70.50" y="176.70" width="8.3" height="15.90" fill="#fff" stroke="#6e3712" stroke-width="0.9" shape-rendering="auto"/><rect x="81.60" y="176.70" width="8.2" height="15.90" fill="#fff" stroke="#6e3712" stroke-width="0.9" shape-rendering="auto"/><rect x="70.50" y="194.80" width="8.3" height="15.90" fill="#fff" stroke="#6e3712" stroke-width="0.9" shape-rendering="auto"/><rect x="81.60" y="194.80" width="8.2" height="15.90" fill="#fff" stroke="#6e3712" stroke-width="0.9" shape-rendering="auto"/><rect x="70.50" y="212.90" width="8.3" height="15.90" fill="#fff" stroke="#6e3712" stroke-width="0.9" shape-rendering="auto"/><rect x="81.60" y="212.90" width="8.2" height="15.90" fill="#fff" stroke="#6e3712" stroke-width="0.9" shape-rendering="auto"/><rect x="68.70" y="230.70" width="23.0" height="2.4" fill="#050505" shape-rendering="auto"/><rect x="70.50" y="233.60" width="8.3" height="15.90" fill="#fff" stroke="#6e3712" stroke-width="0.9" shape-rendering="auto"/><rect x="81.60" y="233.60" width="8.2" height="15.90" fill="#fff" stroke="#6e3712" stroke-width="0.9" shape-rendering="auto"/><rect x="70.50" y="251.70" width="8.3" height="4.80" fill="#fff" stroke="#6e3712" stroke-width="0.9" shape-rendering="auto"/><rect x="81.60" y="251.70" width="8.2" height="4.80" fill="#fff" stroke="#6e3712" stroke-width="0.9" shape-rendering="auto"/><rect x="14.20" y="6" width="1.5" height="251" fill="#111" shape-rendering="auto"/><rect x="91.00" y="6" width="0.9" height="251" fill="#6a3210" shape-rendering="auto"/></svg>
<div style="left:1163px;top:258px;width:2px;height:6px;background:#111"></div>
<svg style="position:absolute;left:1268px;top:258px" width="7" height="6" viewBox="0 0 7 6"><path d="M0 0 H6 V1.3 H2 V2.35 H5.4 V3.6 H2 V4.7 H6 V6 H0 Z" fill="#111"/></svg>
<div style="left:1052px;top:420px;width:1px;height:20px;background:#e0e0e0"></div>
<div style="left:1322px;top:439px;width:201px;height:1px;background:#e8e8e8"></div>
<div style="left:1057px;top:425px;width:14px;height:14px;border:1px solid #8c8c8c;background:#fff"><svg style="position:absolute;left:1px;top:1px" width="11" height="11"><path d="M1.8 5.8 L4.3 8.4 L9.3 2.6" fill="none" stroke="#333" stroke-width="1.2"/></svg></div>
<div class="t" style="left:1075.4px;top:425px;font-size:11.3px;line-height:15px;color:#333;letter-spacing:-0.183px">Spessore reale</div>
<div style="left:1158px;top:425px;width:14px;height:14px;border:1px solid #8c8c8c;background:#fff"></div>
<div class="t" style="left:1176.8px;top:425px;font-size:11.3px;line-height:15px;color:#333;letter-spacing:0.208px">Temperatura</div>
<div style="left:1252px;top:425px;width:14px;height:14px;border:1px solid #8c8c8c;background:#fff"><svg style="position:absolute;left:1px;top:1px" width="11" height="11"><path d="M1.8 5.8 L4.3 8.4 L9.3 2.6" fill="none" stroke="#333" stroke-width="1.2"/></svg></div>
<div class="t" style="left:1270.8px;top:425px;font-size:11.3px;line-height:15px;color:#333;letter-spacing:-0.109px">Pressioni</div>
<div style="left:1054px;top:442px;width:18px;height:21px;border:1px solid #adadad;background:#fff"><svg style="position:absolute;left:2px;top:2px" width="14" height="14" viewBox="0 0 14 14"><circle cx="5.6" cy="5.6" r="4.4" fill="#fff" stroke="#555" stroke-width="1"/><path d="M8.8 8.8 L13 13" stroke="#444" stroke-width="1.6" fill="none"/><path d="M5.6 3.3 v4.6 M3.3 5.6 h4.6" stroke="#1e88d2" stroke-width="1.1" fill="none"/></svg></div>
<div class="t" style="left:1081px;top:445px;font-size:11.3px;line-height:15px;color:#333;letter-spacing:-0.253px">Gennaio</div>
<svg style="position:absolute;left:1085px;top:468px;overflow:visible" width="120" height="92" viewBox="0 0 120 92"><rect x="0" y="0" width="1" height="91" fill="#3c3c3c" shape-rendering="crispEdges"/><rect x="4" y="0" width="1" height="91" fill="#3c3c3c" shape-rendering="crispEdges"/><rect x="28" y="0" width="1" height="91" fill="#3c3c3c" shape-rendering="crispEdges"/><rect x="58" y="0" width="1" height="91" fill="#3c3c3c" shape-rendering="crispEdges"/><rect x="88" y="0" width="1" height="91" fill="#3c3c3c" shape-rendering="crispEdges"/><rect x="90" y="0" width="1" height="91" fill="#3c3c3c" shape-rendering="crispEdges"/><rect x="4" y="41" width="113" height="1" fill="#555" shape-rendering="crispEdges"/><polyline points="0.5,37.1 4.3,41.9 28.5,46.7 58.5,73.0 90.5,75.5" fill="none" stroke="#8b0000" stroke-width="1" shape-rendering="crispEdges"/><polyline points="0.5,61.3 12.5,61.3 28.5,64.4 58.5,74.6 90.5,78.4" fill="none" stroke="#0000ff" stroke-width="1" shape-rendering="crispEdges"/></svg>
<div style="left:1076px;top:515px;width:2px;height:6px;background:#111"></div>
<svg style="position:absolute;left:1181px;top:515px" width="7" height="6" viewBox="0 0 7 6"><path d="M0 0 H6 V1.3 H2 V2.35 H5.4 V3.6 H2 V4.7 H6 V6 H0 Z" fill="#111"/></svg>
<div style="left:1211px;top:442px;width:18px;height:21px;border:1px solid #adadad;background:#fff"><svg style="position:absolute;left:2px;top:2px" width="14" height="14" viewBox="0 0 14 14"><circle cx="5.6" cy="5.6" r="4.4" fill="#fff" stroke="#555" stroke-width="1"/><path d="M8.8 8.8 L13 13" stroke="#444" stroke-width="1.6" fill="none"/><path d="M5.6 3.3 v4.6 M3.3 5.6 h4.6" stroke="#1e88d2" stroke-width="1.1" fill="none"/></svg></div>
<div class="t" style="left:1238px;top:445px;font-size:11.3px;line-height:15px;color:#333;letter-spacing:-0.028px">Febbraio</div>
<svg style="position:absolute;left:1242px;top:468px;overflow:visible" width="120" height="92" viewBox="0 0 120 92"><rect x="0" y="0" width="1" height="91" fill="#3c3c3c" shape-rendering="crispEdges"/><rect x="4" y="0" width="1" height="91" fill="#3c3c3c" shape-rendering="crispEdges"/><rect x="28" y="0" width="1" height="91" fill="#3c3c3c" shape-rendering="crispEdges"/><rect x="58" y="0" width="1" height="91" fill="#3c3c3c" shape-rendering="crispEdges"/><rect x="88" y="0" width="1" height="91" fill="#3c3c3c" shape-rendering="crispEdges"/><rect x="90" y="0" width="1" height="91" fill="#3c3c3c" shape-rendering="crispEdges"/><rect x="4" y="41" width="113" height="1" fill="#555" shape-rendering="crispEdges"/><polyline points="0.5,29.2 4.3,34.0 28.5,37.8 58.5,64.1 90.5,67.6" fill="none" stroke="#8b0000" stroke-width="1" shape-rendering="crispEdges"/><polyline points="0.5,61.3 12.5,61.3 28.5,63.8 58.5,73.0 90.5,76.8" fill="none" stroke="#0000ff" stroke-width="1" shape-rendering="crispEdges"/></svg>
<div style="left:1233px;top:515px;width:2px;height:6px;background:#111"></div>
<svg style="position:absolute;left:1338px;top:515px" width="7" height="6" viewBox="0 0 7 6"><path d="M0 0 H6 V1.3 H2 V2.35 H5.4 V3.6 H2 V4.7 H6 V6 H0 Z" fill="#111"/></svg>
<div style="left:1367px;top:442px;width:18px;height:21px;border:1px solid #adadad;background:#fff"><svg style="position:absolute;left:2px;top:2px" width="14" height="14" viewBox="0 0 14 14"><circle cx="5.6" cy="5.6" r="4.4" fill="#fff" stroke="#555" stroke-width="1"/><path d="M8.8 8.8 L13 13" stroke="#444" stroke-width="1.6" fill="none"/><path d="M5.6 3.3 v4.6 M3.3 5.6 h4.6" stroke="#1e88d2" stroke-width="1.1" fill="none"/></svg></div>
<div class="t" style="left:1394px;top:445px;font-size:11.3px;line-height:15px;color:#333;letter-spacing:-0.323px">Marzo</div>
<svg style="position:absolute;left:1398px;top:468px;overflow:visible" width="120" height="92" viewBox="0 0 120 92"><rect x="0" y="0" width="1" height="91" fill="#3c3c3c" shape-rendering="crispEdges"/><rect x="4" y="0" width="1" height="91" fill="#3c3c3c" shape-rendering="crispEdges"/><rect x="28" y="0" width="1" height="91" fill="#3c3c3c" shape-rendering="crispEdges"/><rect x="58" y="0" width="1" height="91" fill="#3c3c3c" shape-rendering="crispEdges"/><rect x="88" y="0" width="1" height="91" fill="#3c3c3c" shape-rendering="crispEdges"/><rect x="90" y="0" width="1" height="91" fill="#3c3c3c" shape-rendering="crispEdges"/><rect x="4" y="41" width="113" height="1" fill="#555" shape-rendering="crispEdges"/><polyline points="0.5,29.9 4.3,34.0 28.5,36.5 58.5,57.1 90.5,60.0" fill="none" stroke="#8b0000" stroke-width="1" shape-rendering="crispEdges"/><polyline points="0.5,61.3 12.5,61.3 28.5,63.5 58.5,70.5 90.5,73.0" fill="none" stroke="#0000ff" stroke-width="1" shape-rendering="crispEdges"/></svg>
<div style="left:1389px;top:515px;width:2px;height:6px;background:#111"></div>
<svg style="position:absolute;left:1494px;top:515px" width="7" height="6" viewBox="0 0 7 6"><path d="M0 0 H6 V1.3 H2 V2.35 H5.4 V3.6 H2 V4.7 H6 V6 H0 Z" fill="#111"/></svg>
<div style="left:1054px;top:568px;width:18px;height:21px;border:1px solid #adadad;background:#fff"><svg style="position:absolute;left:2px;top:2px" width="14" height="14" viewBox="0 0 14 14"><circle cx="5.6" cy="5.6" r="4.4" fill="#fff" stroke="#555" stroke-width="1"/><path d="M8.8 8.8 L13 13" stroke="#444" stroke-width="1.6" fill="none"/><path d="M5.6 3.3 v4.6 M3.3 5.6 h4.6" stroke="#1e88d2" stroke-width="1.1" fill="none"/></svg></div>
<div class="t" style="left:1081px;top:571px;font-size:11.3px;line-height:15px;color:#333;letter-spacing:0.182px">Aprile</div>
<svg style="position:absolute;left:1085px;top:594px;overflow:visible" width="120" height="92" viewBox="0 0 120 92"><rect x="0" y="0" width="1" height="91" fill="#3c3c3c" shape-rendering="crispEdges"/><rect x="4" y="0" width="1" height="91" fill="#3c3c3c" shape-rendering="crispEdges"/><rect x="28" y="0" width="1" height="91" fill="#3c3c3c" shape-rendering="crispEdges"/><rect x="58" y="0" width="1" height="91" fill="#3c3c3c" shape-rendering="crispEdges"/><rect x="88" y="0" width="1" height="91" fill="#3c3c3c" shape-rendering="crispEdges"/><rect x="90" y="0" width="1" height="91" fill="#3c3c3c" shape-rendering="crispEdges"/><rect x="4" y="41" width="113" height="1" fill="#555" shape-rendering="crispEdges"/><polyline points="0.5,36.4 4.3,38.0 28.5,40.5 58.5,52.9 90.5,54.8" fill="none" stroke="#8b0000" stroke-width="1" shape-rendering="crispEdges"/><polyline points="0.5,61.3 12.5,61.3 28.5,62.3 58.5,67.2 90.5,68.5" fill="none" stroke="#0000ff" stroke-width="1" shape-rendering="crispEdges"/></svg>
<div style="left:1076px;top:641px;width:2px;height:6px;background:#111"></div>
<svg style="position:absolute;left:1181px;top:641px" width="7" height="6" viewBox="0 0 7 6"><path d="M0 0 H6 V1.3 H2 V2.35 H5.4 V3.6 H2 V4.7 H6 V6 H0 Z" fill="#111"/></svg>
<div style="left:1211px;top:568px;width:18px;height:21px;border:1px solid #adadad;background:#fff"><svg style="position:absolute;left:2px;top:2px" width="14" height="14" viewBox="0 0 14 14"><circle cx="5.6" cy="5.6" r="4.4" fill="#fff" stroke="#555" stroke-width="1"/><path d="M8.8 8.8 L13 13" stroke="#444" stroke-width="1.6" fill="none"/><path d="M5.6 3.3 v4.6 M3.3 5.6 h4.6" stroke="#1e88d2" stroke-width="1.1" fill="none"/></svg></div>
<div class="t" style="left:1238px;top:571px;font-size:11.3px;line-height:15px;color:#333;letter-spacing:0.008px">Maggio</div>
<svg style="position:absolute;left:1242px;top:594px;overflow:visible" width="120" height="92" viewBox="0 0 120 92"><rect x="0" y="0" width="1" height="91" fill="#3c3c3c" shape-rendering="crispEdges"/><rect x="4" y="0" width="1" height="91" fill="#3c3c3c" shape-rendering="crispEdges"/><rect x="28" y="0" width="1" height="91" fill="#3c3c3c" shape-rendering="crispEdges"/><rect x="58" y="0" width="1" height="91" fill="#3c3c3c" shape-rendering="crispEdges"/><rect x="88" y="0" width="1" height="91" fill="#3c3c3c" shape-rendering="crispEdges"/><rect x="90" y="0" width="1" height="91" fill="#3c3c3c" shape-rendering="crispEdges"/><rect x="4" y="41" width="113" height="1" fill="#555" shape-rendering="crispEdges"/><polyline points="0.5,44.0 42.5,44.0 45.5,45.0 90.5,45.0" fill="none" stroke="#8b0000" stroke-width="1" shape-rendering="crispEdges"/><polyline points="0.5,61.3 32.5,61.3 58.5,64.0 90.5,65.3" fill="none" stroke="#0000ff" stroke-width="1" shape-rendering="crispEdges"/></svg>
<div style="left:1233px;top:641px;width:2px;height:6px;background:#111"></div>
<svg style="position:absolute;left:1338px;top:641px" width="7" height="6" viewBox="0 0 7 6"><path d="M0 0 H6 V1.3 H2 V2.35 H5.4 V3.6 H2 V4.7 H6 V6 H0 Z" fill="#111"/></svg>
<div style="left:1367px;top:568px;width:18px;height:21px;border:1px solid #adadad;background:#fff"><svg style="position:absolute;left:2px;top:2px" width="14" height="14" viewBox="0 0 14 14"><circle cx="5.6" cy="5.6" r="4.4" fill="#fff" stroke="#555" stroke-width="1"/><path d="M8.8 8.8 L13 13" stroke="#444" stroke-width="1.6" fill="none"/><path d="M5.6 3.3 v4.6 M3.3 5.6 h4.6" stroke="#1e88d2" stroke-width="1.1" fill="none"/></svg></div>
<div class="t" style="left:1394px;top:571px;font-size:11.3px;line-height:15px;color:#333;letter-spacing:-0.128px">Giugno</div>
<svg style="position:absolute;left:1398px;top:594px;overflow:visible" width="120" height="92" viewBox="0 0 120 92"><rect x="0" y="0" width="1" height="91" fill="#3c3c3c" shape-rendering="crispEdges"/><rect x="4" y="0" width="1" height="91" fill="#3c3c3c" shape-rendering="crispEdges"/><rect x="28" y="0" width="1" height="91" fill="#3c3c3c" shape-rendering="crispEdges"/><rect x="58" y="0" width="1" height="91" fill="#3c3c3c" shape-rendering="crispEdges"/><rect x="88" y="0" width="1" height="91" fill="#3c3c3c" shape-rendering="crispEdges"/><rect x="90" y="0" width="1" height="91" fill="#3c3c3c" shape-rendering="crispEdges"/><rect x="4" y="41" width="113" height="1" fill="#555" shape-rendering="crispEdges"/><polyline points="0.5,37.1 90.5,37.1" fill="none" stroke="#8b0000" stroke-width="1" shape-rendering="crispEdges"/><polyline points="0.5,61.3 41.5,61.3 44.5,62.3 71.5,62.3 74.5,63.2 90.5,63.2" fill="none" stroke="#0000ff" stroke-width="1" shape-rendering="crispEdges"/></svg>
<div style="left:1389px;top:641px;width:2px;height:6px;background:#111"></div>
<svg style="position:absolute;left:1494px;top:641px" width="7" height="6" viewBox="0 0 7 6"><path d="M0 0 H6 V1.3 H2 V2.35 H5.4 V3.6 H2 V4.7 H6 V6 H0 Z" fill="#111"/></svg>
<div style="left:1054px;top:694px;width:18px;height:21px;border:1px solid #adadad;background:#fff"><svg style="position:absolute;left:2px;top:2px" width="14" height="14" viewBox="0 0 14 14"><circle cx="5.6" cy="5.6" r="4.4" fill="#fff" stroke="#555" stroke-width="1"/><path d="M8.8 8.8 L13 13" stroke="#444" stroke-width="1.6" fill="none"/><path d="M5.6 3.3 v4.6 M3.3 5.6 h4.6" stroke="#1e88d2" stroke-width="1.1" fill="none"/></svg></div>
<div class="t" style="left:1081px;top:697px;font-size:11.3px;line-height:15px;color:#333;letter-spacing:-0.071px">Luglio</div>
<svg style="position:absolute;left:1085px;top:720px;overflow:visible" width="120" height="92" viewBox="0 0 120 92"><rect x="0" y="0" width="1" height="91" fill="#3c3c3c" shape-rendering="crispEdges"/><rect x="4" y="0" width="1" height="91" fill="#3c3c3c" shape-rendering="crispEdges"/><rect x="28" y="0" width="1" height="91" fill="#3c3c3c" shape-rendering="crispEdges"/><rect x="58" y="0" width="1" height="91" fill="#3c3c3c" shape-rendering="crispEdges"/><rect x="88" y="0" width="1" height="91" fill="#3c3c3c" shape-rendering="crispEdges"/><rect x="90" y="0" width="1" height="91" fill="#3c3c3c" shape-rendering="crispEdges"/><rect x="4" y="41" width="113" height="1" fill="#555" shape-rendering="crispEdges"/><polyline points="0.5,28.4 90.5,28.4" fill="none" stroke="#8b0000" stroke-width="1" shape-rendering="crispEdges"/><polyline points="0.5,61.3 41.5,61.3 44.5,62.3 71.5,62.3 74.5,63.2 90.5,63.2" fill="none" stroke="#0000ff" stroke-width="1" shape-rendering="crispEdges"/></svg>
<div style="left:1076px;top:767px;width:2px;height:6px;background:#111"></div>
<svg style="position:absolute;left:1181px;top:767px" width="7" height="6" viewBox="0 0 7 6"><path d="M0 0 H6 V1.3 H2 V2.35 H5.4 V3.6 H2 V4.7 H6 V6 H0 Z" fill="#111"/></svg>
<div style="left:1211px;top:694px;width:18px;height:21px;border:1px solid #adadad;background:#fff"><svg style="position:absolute;left:2px;top:2px" width="14" height="14" viewBox="0 0 14 14"><circle cx="5.6" cy="5.6" r="4.4" fill="#fff" stroke="#555" stroke-width="1"/><path d="M8.8 8.8 L13 13" stroke="#444" stroke-width="1.6" fill="none"/><path d="M5.6 3.3 v4.6 M3.3 5.6 h4.6" stroke="#1e88d2" stroke-width="1.1" fill="none"/></svg></div>
<div class="t" style="left:1238px;top:697px;font-size:11.3px;line-height:15px;color:#333;letter-spacing:0.066px">Agosto</div>
<svg style="position:absolute;left:1242px;top:720px;overflow:visible" width="120" height="92" viewBox="0 0 120 92"><rect x="0" y="0" width="1" height="91" fill="#3c3c3c" shape-rendering="crispEdges"/><rect x="4" y="0" width="1" height="91" fill="#3c3c3c" shape-rendering="crispEdges"/><rect x="28" y="0" width="1" height="91" fill="#3c3c3c" shape-rendering="crispEdges"/><rect x="58" y="0" width="1" height="91" fill="#3c3c3c" shape-rendering="crispEdges"/><rect x="88" y="0" width="1" height="91" fill="#3c3c3c" shape-rendering="crispEdges"/><rect x="90" y="0" width="1" height="91" fill="#3c3c3c" shape-rendering="crispEdges"/><rect x="4" y="41" width="113" height="1" fill="#555" shape-rendering="crispEdges"/><polyline points="0.5,41.4 90.5,41.4" fill="none" stroke="#8b0000" stroke-width="1" shape-rendering="crispEdges"/><polyline points="0.5,61.3 41.5,61.3 44.5,62.3 71.5,62.3 74.5,63.2 90.5,63.2" fill="none" stroke="#0000ff" stroke-width="1" shape-rendering="crispEdges"/></svg>
<div style="left:1233px;top:767px;width:2px;height:6px;background:#111"></div>
<svg style="position:absolute;left:1338px;top:767px" width="7" height="6" viewBox="0 0 7 6"><path d="M0 0 H6 V1.3 H2 V2.35 H5.4 V3.6 H2 V4.7 H6 V6 H0 Z" fill="#111"/></svg>
<div style="left:1367px;top:694px;width:18px;height:21px;border:1px solid #adadad;background:#fff"><svg style="position:absolute;left:2px;top:2px" width="14" height="14" viewBox="0 0 14 14"><circle cx="5.6" cy="5.6" r="4.4" fill="#fff" stroke="#555" stroke-width="1"/><path d="M8.8 8.8 L13 13" stroke="#444" stroke-width="1.6" fill="none"/><path d="M5.6 3.3 v4.6 M3.3 5.6 h4.6" stroke="#1e88d2" stroke-width="1.1" fill="none"/></svg></div>
<div class="t" style="left:1394px;top:697px;font-size:11.3px;line-height:15px;color:#333;letter-spacing:-0.053px">Settembre</div>
<svg style="position:absolute;left:1398px;top:720px;overflow:visible" width="120" height="92" viewBox="0 0 120 92"><rect x="0" y="0" width="1" height="91" fill="#3c3c3c" shape-rendering="crispEdges"/><rect x="4" y="0" width="1" height="91" fill="#3c3c3c" shape-rendering="crispEdges"/><rect x="28" y="0" width="1" height="91" fill="#3c3c3c" shape-rendering="crispEdges"/><rect x="58" y="0" width="1" height="91" fill="#3c3c3c" shape-rendering="crispEdges"/><rect x="88" y="0" width="1" height="91" fill="#3c3c3c" shape-rendering="crispEdges"/><rect x="90" y="0" width="1" height="91" fill="#3c3c3c" shape-rendering="crispEdges"/><rect x="4" y="41" width="113" height="1" fill="#555" shape-rendering="crispEdges"/><polyline points="0.5,49.3 90.5,49.3" fill="none" stroke="#8b0000" stroke-width="1" shape-rendering="crispEdges"/><polyline points="0.5,61.3 41.5,61.3 44.5,62.3 71.5,62.3 74.5,63.2 90.5,63.2" fill="none" stroke="#0000ff" stroke-width="1" shape-rendering="crispEdges"/></svg>
<div style="left:1389px;top:767px;width:2px;height:6px;background:#111"></div>
<svg style="position:absolute;left:1494px;top:767px" width="7" height="6" viewBox="0 0 7 6"><path d="M0 0 H6 V1.3 H2 V2.35 H5.4 V3.6 H2 V4.7 H6 V6 H0 Z" fill="#111"/></svg>
<div style="left:1054px;top:820px;width:18px;height:21px;border:1px solid #adadad;background:#fff"><svg style="position:absolute;left:2px;top:2px" width="14" height="14" viewBox="0 0 14 14"><circle cx="5.6" cy="5.6" r="4.4" fill="#fff" stroke="#555" stroke-width="1"/><path d="M8.8 8.8 L13 13" stroke="#444" stroke-width="1.6" fill="none"/><path d="M5.6 3.3 v4.6 M3.3 5.6 h4.6" stroke="#1e88d2" stroke-width="1.1" fill="none"/></svg></div>
<div class="t" style="left:1081px;top:823px;font-size:11.3px;line-height:15px;color:#333;letter-spacing:0.319px">Ottobre</div>
<svg style="position:absolute;left:1085px;top:846px;overflow:visible" width="120" height="92" viewBox="0 0 120 92"><rect x="0" y="0" width="1" height="91" fill="#3c3c3c" shape-rendering="crispEdges"/><rect x="4" y="0" width="1" height="91" fill="#3c3c3c" shape-rendering="crispEdges"/><rect x="28" y="0" width="1" height="91" fill="#3c3c3c" shape-rendering="crispEdges"/><rect x="58" y="0" width="1" height="91" fill="#3c3c3c" shape-rendering="crispEdges"/><rect x="88" y="0" width="1" height="91" fill="#3c3c3c" shape-rendering="crispEdges"/><rect x="90" y="0" width="1" height="91" fill="#3c3c3c" shape-rendering="crispEdges"/><rect x="4" y="40" width="113" height="1" fill="#555" shape-rendering="crispEdges"/><polyline points="0.5,46.5 4.3,47.6 28.5,49.2 58.5,56.8 90.5,57.8" fill="none" stroke="#8b0000" stroke-width="1" shape-rendering="crispEdges"/><polyline points="0.5,60.4 12.5,60.4 28.5,61.6 58.5,64.4 90.5,65.4" fill="none" stroke="#0000ff" stroke-width="1" shape-rendering="crispEdges"/></svg>
<div style="left:1076px;top:893px;width:2px;height:6px;background:#111"></div>
<svg style="position:absolute;left:1181px;top:893px" width="7" height="6" viewBox="0 0 7 6"><path d="M0 0 H6 V1.3 H2 V2.35 H5.4 V3.6 H2 V4.7 H6 V6 H0 Z" fill="#111"/></svg>
<div style="left:1211px;top:820px;width:18px;height:21px;border:1px solid #adadad;background:#fff"><svg style="position:absolute;left:2px;top:2px" width="14" height="14" viewBox="0 0 14 14"><circle cx="5.6" cy="5.6" r="4.4" fill="#fff" stroke="#555" stroke-width="1"/><path d="M8.8 8.8 L13 13" stroke="#444" stroke-width="1.6" fill="none"/><path d="M5.6 3.3 v4.6 M3.3 5.6 h4.6" stroke="#1e88d2" stroke-width="1.1" fill="none"/></svg></div>
<div class="t" style="left:1238px;top:823px;font-size:11.3px;line-height:15px;color:#333;letter-spacing:0.125px">Novembre</div>
<svg style="position:absolute;left:1242px;top:846px;overflow:visible" width="120" height="92" viewBox="0 0 120 92"><rect x="0" y="0" width="1" height="91" fill="#3c3c3c" shape-rendering="crispEdges"/><rect x="4" y="0" width="1" height="91" fill="#3c3c3c" shape-rendering="crispEdges"/><rect x="28" y="0" width="1" height="91" fill="#3c3c3c" shape-rendering="crispEdges"/><rect x="58" y="0" width="1" height="91" fill="#3c3c3c" shape-rendering="crispEdges"/><rect x="88" y="0" width="1" height="91" fill="#3c3c3c" shape-rendering="crispEdges"/><rect x="90" y="0" width="1" height="91" fill="#3c3c3c" shape-rendering="crispEdges"/><rect x="4" y="40" width="113" height="1" fill="#555" shape-rendering="crispEdges"/><polyline points="0.5,39.5 4.3,43.2 28.5,44.9 58.5,62.7 90.5,65.5" fill="none" stroke="#8b0000" stroke-width="1" shape-rendering="crispEdges"/><polyline points="0.5,60.4 12.5,60.4 28.5,62.8 58.5,68.2 90.5,70.4" fill="none" stroke="#0000ff" stroke-width="1" shape-rendering="crispEdges"/></svg>
<div style="left:1233px;top:893px;width:2px;height:6px;background:#111"></div>
<svg style="position:absolute;left:1338px;top:893px" width="7" height="6" viewBox="0 0 7 6"><path d="M0 0 H6 V1.3 H2 V2.35 H5.4 V3.6 H2 V4.7 H6 V6 H0 Z" fill="#111"/></svg>
<div style="left:1367px;top:820px;width:18px;height:21px;border:1px solid #adadad;background:#fff"><svg style="position:absolute;left:2px;top:2px" width="14" height="14" viewBox="0 0 14 14"><circle cx="5.6" cy="5.6" r="4.4" fill="#fff" stroke="#555" stroke-width="1"/><path d="M8.8 8.8 L13 13" stroke="#444" stroke-width="1.6" fill="none"/><path d="M5.6 3.3 v4.6 M3.3 5.6 h4.6" stroke="#1e88d2" stroke-width="1.1" fill="none"/></svg></div>
<div class="t" style="left:1394px;top:823px;font-size:11.3px;line-height:15px;color:#333;letter-spacing:-0.063px">Dicembre</div>
<svg style="position:absolute;left:1398px;top:846px;overflow:visible" width="120" height="92" viewBox="0 0 120 92"><rect x="0" y="0" width="1" height="91" fill="#3c3c3c" shape-rendering="crispEdges"/><rect x="4" y="0" width="1" height="91" fill="#3c3c3c" shape-rendering="crispEdges"/><rect x="28" y="0" width="1" height="91" fill="#3c3c3c" shape-rendering="crispEdges"/><rect x="58" y="0" width="1" height="91" fill="#3c3c3c" shape-rendering="crispEdges"/><rect x="88" y="0" width="1" height="91" fill="#3c3c3c" shape-rendering="crispEdges"/><rect x="90" y="0" width="1" height="91" fill="#3c3c3c" shape-rendering="crispEdges"/><rect x="4" y="40" width="113" height="1" fill="#555" shape-rendering="crispEdges"/><polyline points="0.5,37.3 4.3,42.4 28.5,45.9 58.5,70.0 90.5,72.9" fill="none" stroke="#8b0000" stroke-width="1" shape-rendering="crispEdges"/><polyline points="0.5,60.4 12.5,60.4 28.5,63.4 58.5,72.3 90.5,75.5" fill="none" stroke="#0000ff" stroke-width="1" shape-rendering="crispEdges"/></svg>
<div style="left:1389px;top:893px;width:2px;height:6px;background:#111"></div>
<svg style="position:absolute;left:1494px;top:893px" width="7" height="6" viewBox="0 0 7 6"><path d="M0 0 H6 V1.3 H2 V2.35 H5.4 V3.6 H2 V4.7 H6 V6 H0 Z" fill="#111"/></svg>
</body></html>
